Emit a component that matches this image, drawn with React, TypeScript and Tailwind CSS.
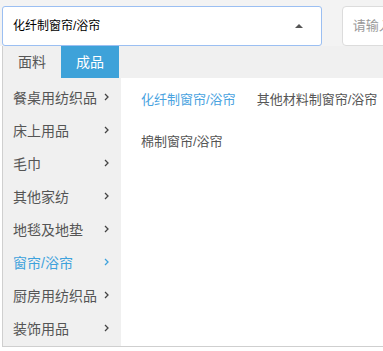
const SIDE_ITEMS = ['餐桌用纺织品', '床上用品', '毛巾', '其他家纺', '地毯及地垫', '窗帘/浴帘', '厨房用纺织品', '装饰用品'];
const ACTIVE_SIDE = '窗帘/浴帘';

function Chevron({ active }: { active?: boolean }) {
    return (
        <svg width="5" height="8" viewBox="0 0 5 8" className="shrink-0 -mt-[3px]">
            <path d="M1 1 L4 4 L1 7" fill="none" stroke={active ? '#3ea2dc' : '#444'} strokeWidth="1.3" />
        </svg>
    );
}

export default function App() {
    return (
        <div className="w-[383px] h-[351px] overflow-hidden bg-white" style={{ fontFamily: '"Liberation Sans", "Noto Sans CJK SC", sans-serif' }}>
            <div className="w-[520px] bg-[#f3f3f3] h-[46px] pt-[6px] pl-[2px] flex">
                <div className="w-[323px] h-[40px] bg-white border border-[#9bbff2] rounded-[3px] flex items-center pl-[10px] pr-[18px] justify-between">
                    <span className="text-[12px] text-black">化纤制窗帘/浴帘</span>
                    <span className="w-0 h-0 border-l-[4px] border-r-[4px] border-b-[4px] border-l-transparent border-r-transparent border-b-[#555]"></span>
                </div>
                <div className="ml-[20px] w-[180px] h-[40px] bg-white border border-[#dcdcdc] rounded-[4px] flex items-center pl-[10px] text-[13px] text-[#999]">
                    请输入关键字
                </div>
            </div>

            <div className="ml-[2px] w-[520px] border-l border-b border-[#cfcfcf]">
                <div className="h-[32px] bg-[#f0f0f0] flex text-[14px]">
                    <div className="w-[58px] flex items-center justify-center text-[#555]">面料</div>
                    <div className="w-[58px] flex items-center justify-center bg-[#3ea2d9] text-white">成品</div>
                </div>
                <div className="flex">
                    <div className="w-[118px] bg-[#f0f0f0] pt-[4px]">
                        {SIDE_ITEMS.map((item) => {
                            const active = item === ACTIVE_SIDE;
                            return (
                                <div key={item} className="h-[33px] flex items-center justify-between pl-[10px] pr-[12px]">
                                    <span className={`text-[14px] ${active ? 'text-[#3ea2dc]' : 'text-[#555]'}`}>{item}</span>
                                    <Chevron active={active} />
                                </div>
                            );
                        })}
                    </div>
                    <div className="flex-1 pl-[20px] pt-[12px] text-[13px] text-[#555]">
                        <div className="flex gap-[21px] h-[20px] items-center">
                            <span className="text-[#4aa3df]">化纤制窗帘/浴帘</span>
                            <span>其他材料制窗帘/浴帘</span>
                        </div>
                        <div className="flex gap-[21px] h-[20px] items-center mt-[22px]">
                            <span>棉制窗帘/浴帘</span>
                        </div>
                    </div>
                </div>
            </div>
        </div>
    );
}
